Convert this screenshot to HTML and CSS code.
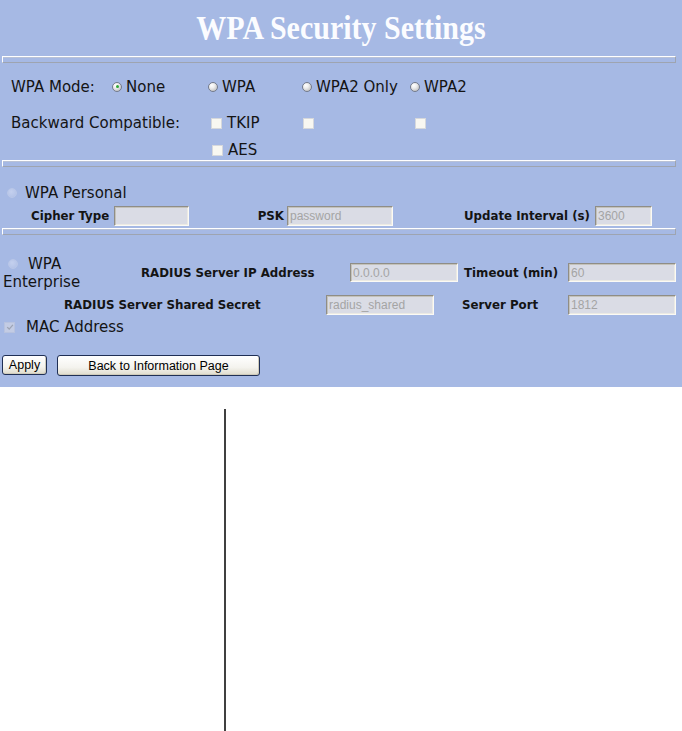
FILE: index.html
```html
<!DOCTYPE html>
<html>
<head>
<meta charset="utf-8">
<title>WPA Security Settings</title>
<link rel="stylesheet" href="styles.css">
</head>
<body>
<div class="panel">
  <div class="title-wrap"><h1 class="title">WPA Security Settings</h1></div>
  <div class="rule"></div>

  <div class="mode">
    <span class="lbl">WPA Mode:</span>
    <span class="opt"><span class="radio on"></span>None</span>
    <span class="opt"><span class="radio"></span>WPA</span>
    <span class="opt"><span class="radio"></span>WPA2 Only</span>
    <span class="opt"><span class="radio"></span>WPA2</span>
  </div>

  <div class="compat">
    <span class="lbl">Backward Compatible:</span>
    <span class="opt"><span class="check"></span>TKIP</span>
    <span class="opt"><span class="check c2"></span></span>
    <span class="opt"><span class="check"></span></span>
    <span class="empty"></span>
    <span class="opt aes"><span class="check"></span>AES</span>
  </div>

  <div class="rule"></div>

  <div class="personal"><span class="radio off"></span>WPA Personal</div>
  <div class="cipher">
    <span class="blbl w1">Cipher Type</span>
    <input class="field f75" value="" disabled>
    <span class="blbl w2">PSK</span>
    <input class="field f106" value="password" disabled>
    <span class="blbl w3">Update Interval (s)</span>
    <input class="field f57" value="3600" disabled>
  </div>

  <div class="rule"></div>

  <div class="ent-row">
    <div class="ent"><div class="ent-text"><span class="radio off"></span>WPA Enterprise</div></div>
    <span class="blbl w4">RADIUS Server IP Address</span>
    <input class="field f108" value="0.0.0.0" disabled>
    <span class="blbl w5">Timeout (min)</span>
    <input class="field f108" value="60" disabled>
  </div>
  <div class="secret-row">
    <span class="blbl w6">RADIUS Server Shared Secret</span>
    <input class="field f108" value="radius_shared" disabled>
    <span class="blbl w7">Server Port</span>
    <input class="field f108" value="1812" disabled>
  </div>
  <div class="mac">
    <span class="check off"><svg viewBox="0 0 10 10" width="8" height="8"><path d="M1.5 5.2 L4 7.6 L8.6 2.4" fill="none" stroke="#9da4b4" stroke-width="1.6"/></svg></span>MAC Address
  </div>

  <div class="buttons">
    <button class="btn apply" type="button">Apply</button>
    <button class="btn back" type="button">Back to Information Page</button>
  </div>
</div>
<div class="lower">
  <div class="vcol"></div>
</div>
</body>
</html>
```
FILE: styles.css
```css
html, body {
  margin: 0;
  padding: 0;
  background: #fff;
}
body {
  width: 682px;
  height: 731px;
  overflow: hidden;
  font-family: "DejaVu Sans", Verdana, sans-serif;
  color: #141414;
}
.panel {
  background: #a6b9e4;
  height: 387px;
  box-sizing: border-box;
}
.title-wrap {
  height: 56px;
  box-sizing: border-box;
  padding-top: 10px;
  text-align: center;
}
.title {
  display: inline-block;
  margin: 0;
  font: bold 30px/30px "Liberation Serif", "Times New Roman", serif;
  color: #fbfcff;
  transform: scaleY(1.15);
  transform-origin: center top;
}
.rule {
  height: 7px;
  box-sizing: border-box;
  margin: 0 6px 0 2px;
  border-top: 1px solid #ffffff;
  border-left: 1px solid #ffffff;
  border-bottom: 1px solid #9ea4b0;
  border-right: 1px solid #9ea4b0;
  box-shadow: inset 0 1px 0 #b9c2d6;
}
.mode {
  display: grid;
  grid-template-columns: 101px 96px 94px 108px 1fr;
  padding-left: 11px;
  height: 47px;
  align-items: center;
  font-size: 15px;
}
.opt {
  display: flex;
  align-items: center;
  white-space: nowrap;
}
.radio {
  display: inline-block;
  flex: none;
  position: relative;
  width: 8px;
  height: 8px;
  border-radius: 50%;
  border: 1px solid #747b8c;
  background: radial-gradient(circle at 35% 30%, #ffffff 0, #eeeeee 35%, #b0b0b0 100%);
  margin-right: 4px;
}
.radio.on::after {
  content: "";
  position: absolute;
  left: 2.5px;
  top: 2.5px;
  width: 3px;
  height: 3px;
  border-radius: 50%;
  background: #2ea836;
}
.radio.off {
  border-color: #b9c7e8;
  background: radial-gradient(circle at 40% 35%, #c4d0ee 0, #b0c0e6 100%);
  vertical-align: middle;
}
.compat {
  display: grid;
  grid-template-columns: 200px 92px 112px 1fr;
  grid-template-rows: 26px 24px;
  padding-left: 11px;
  align-items: center;
  font-size: 15px;
}
.check {
  display: inline-block;
  flex: none;
  width: 9px;
  height: 9px;
  background: #f8f7f1;
  border: 1px solid #d6d8dc;
  margin-right: 5px;
}
.aes {
  padding-top: 4px;
  margin-left: 1px;
}
.personal {
  margin-top: 15px;
  height: 22px;
  display: flex;
  align-items: center;
  padding-left: 7px;
  font-size: 15px;
}
.personal .radio {
  margin-right: 8px;
}
.blbl {
  font-weight: bold;
  font-size: 11.8px;
  white-space: nowrap;
  box-sizing: border-box;
  flex: none;
}
.cipher {
  height: 24px;
  display: flex;
  align-items: center;
  padding-left: 31px;
}
.w1 { width: 83px; }
.w2 { width: 98px; text-align: right; padding-right: 3px; }
.w3 { width: 202px; text-align: right; padding-right: 5px; }
.field {
  box-sizing: border-box;
  height: 20px;
  margin: 0;
  padding: 0 0 0 2px;
  border: 1px solid;
  border-color: #8f8d86 #fbfaf5 #fbfaf5 #8f8d86;
  box-shadow: inset 1px 1px 0 #c4c2ba, inset -1px -1px 0 #eceae3;
  background: #dadce5;
  color: #a4a4a4;
  font: 12px "Liberation Sans", Arial, sans-serif;
  opacity: 1;
  flex: none;
}
.f75 { width: 75px; }
.f106 { width: 106px; }
.f57 { width: 57px; }
.f108 { width: 108px; height: 19px; }
.ent-row {
  margin-top: 19px;
  height: 37px;
  display: flex;
  align-items: center;
}
.ent {
  width: 141px;
  flex: none;
  box-sizing: border-box;
  padding-left: 3px;
  font-size: 15px;
  line-height: 18px;
}
.ent-text {
  width: 82px;
}
.ent .radio {
  margin-left: 5px;
  margin-right: 10px;
}
.w4 { width: 209px; }
.w5 { width: 110px; padding-left: 6px; }
.secret-row {
  margin-top: 1px;
  height: 26px;
  display: flex;
  align-items: center;
  padding-left: 64px;
}
.secret-row .field { height: 20px; }
.w6 { width: 262px; }
.w7 { width: 134px; padding-left: 28px; }
.mac {
  height: 18px;
  display: flex;
  align-items: center;
  padding-left: 4px;
  font-size: 15px;
}
.check.off {
  background: #c3cce4;
  border-color: #b8c3df;
  margin-right: 11px;
  display: flex;
  align-items: center;
  justify-content: center;
}
.buttons {
  margin-top: 19px;
  display: flex;
  align-items: flex-start;
  padding-left: 2px;
  gap: 10px;
}
.btn {
  margin: 0;
  padding: 0;
  border: 1px solid #1f2f55;
  border-radius: 3px;
  background: linear-gradient(#ffffff, #f4f3ee 60%, #dedbcc);
  font: 12.5px "Liberation Sans", Arial, sans-serif;
  color: #000;
  box-shadow: inset -1px -1px 0 #cfcbbb;
}
.apply { width: 45px; height: 20px; }
.back { width: 203px; height: 21px; }
.lower {
  padding-top: 22px;
  display: flex;
}
.vcol {
  width: 224px;
  height: 322px;
  border-right: 2px solid #404040;
}
```
